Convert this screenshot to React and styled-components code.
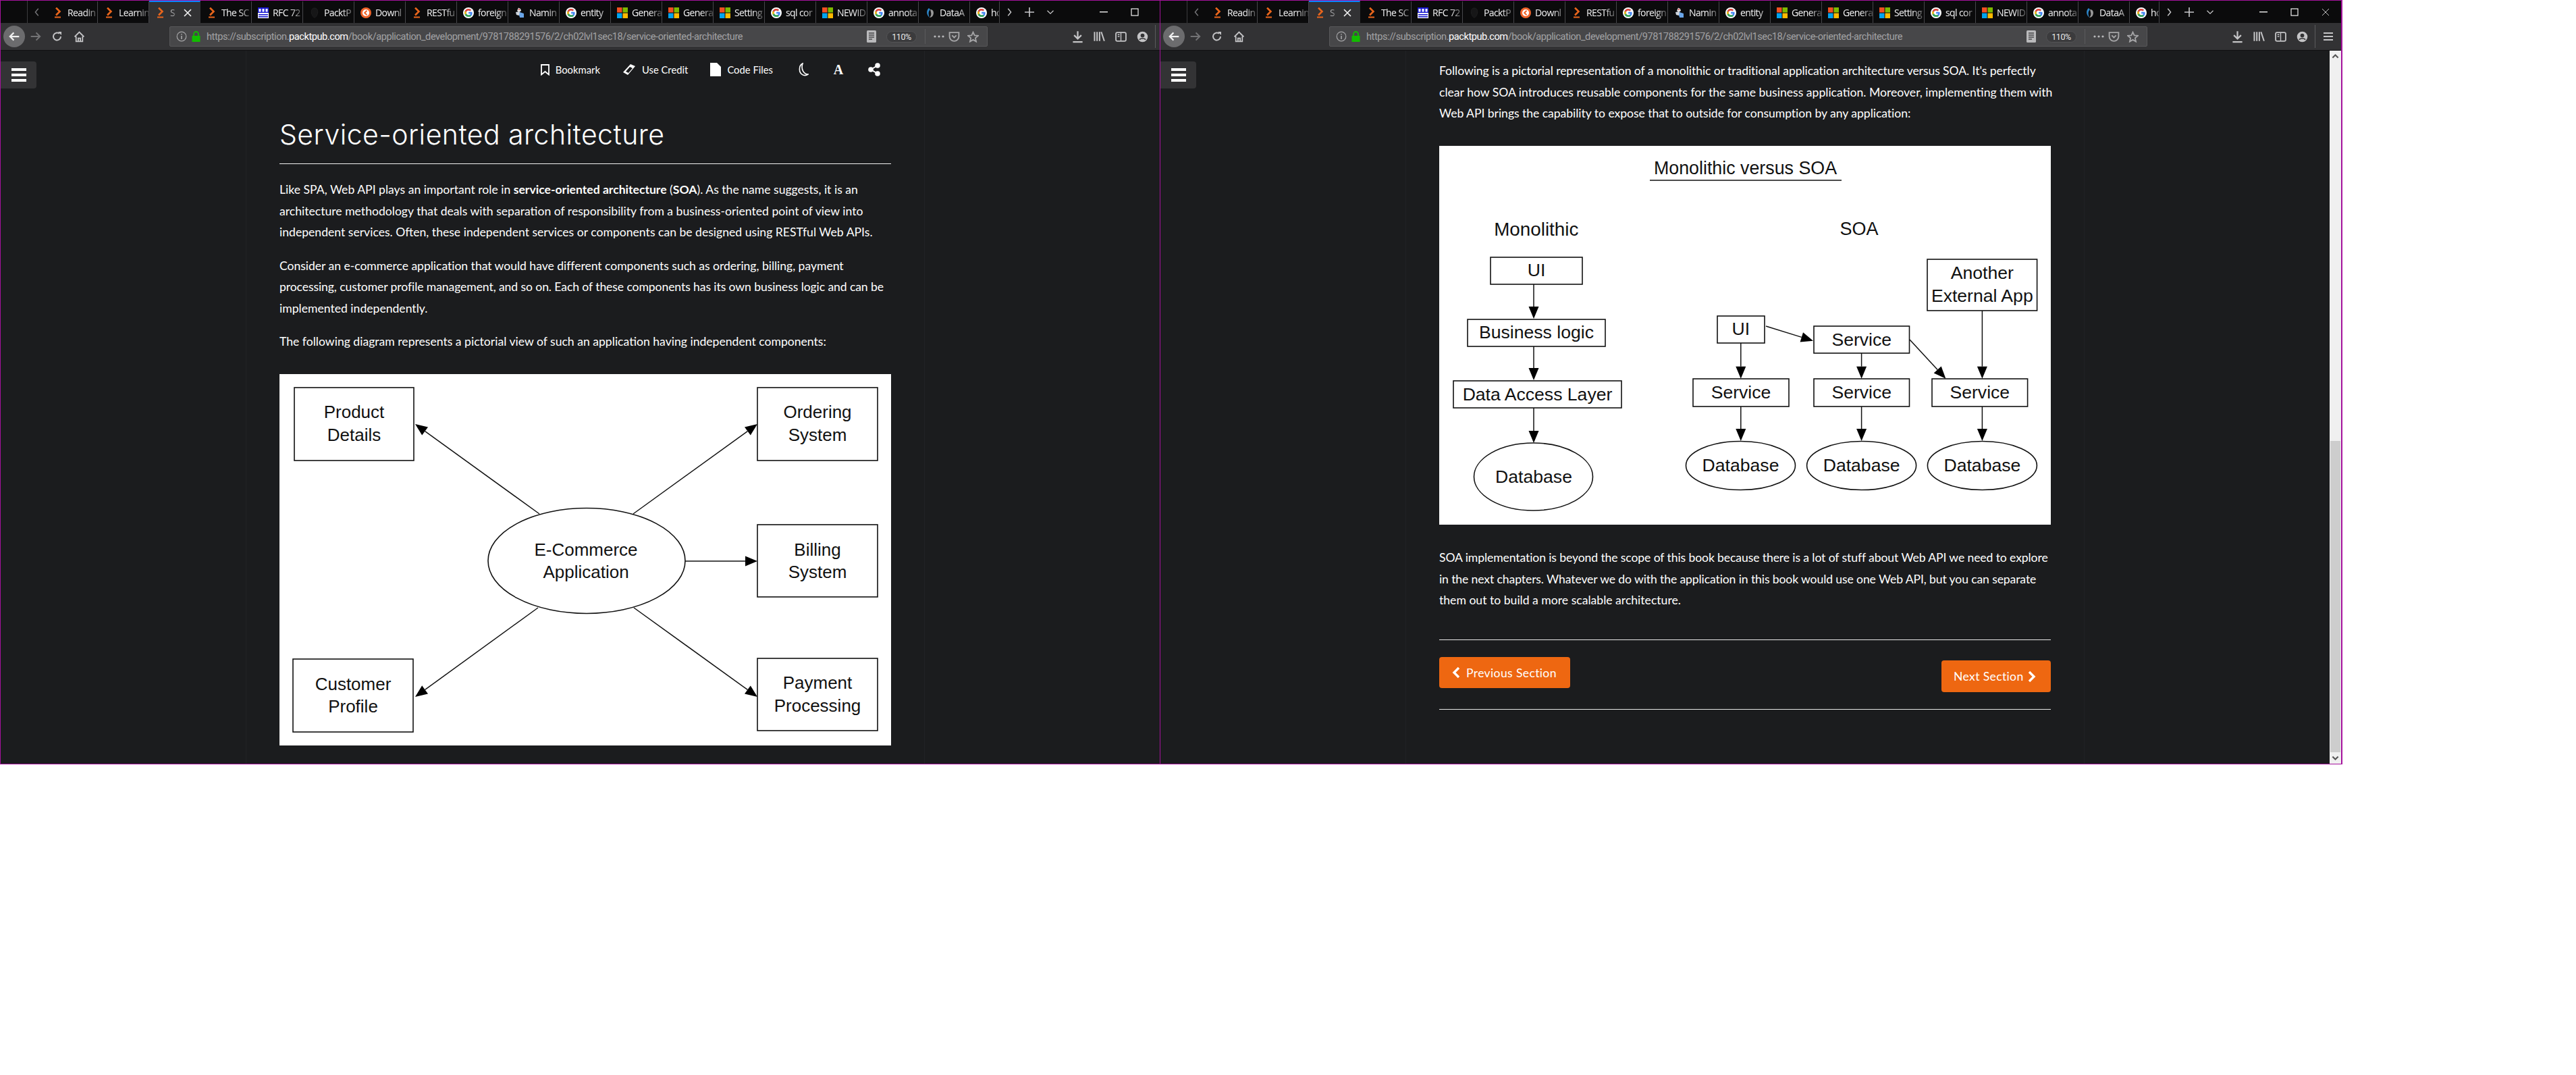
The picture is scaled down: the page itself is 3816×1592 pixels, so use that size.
import React from "react";
import styled, { createGlobalStyle } from "styled-components";

const Global = createGlobalStyle`
  html, body { margin: 0; padding: 0; background: #fff; }
  * { box-sizing: border-box; }
`;

const Screen = styled.div`
  display: flex;
  align-items: flex-start;
  width: 3816px;
  height: 1592px;
  background: #fff;
  overflow: hidden;
  font-family: "Lato", "Liberation Sans", sans-serif;
`;
const Frame = styled.div`
  flex: none;
  width: ${(p) => p.$width}px;
  height: 1132px;
  overflow: hidden;
  border-top: 1px solid #a4129c;
  border-bottom: 1px solid #a4129c;
  border-left: 1px solid #a4129c;
  border-right: ${(p) => (p.$last ? "2px solid #a4129c" : "0")};
`;
const Inner = styled.div`
  width: 1749px;
  height: 100%;
  display: flex;
  flex-direction: column;
`;

/* ---------- tab strip ---------- */
const TabBar = styled.div`
  flex: none;
  height: 33px;
  display: flex;
  align-items: stretch;
  background: #0b0b0c;
  padding-left: 39px;
`;
const TabScroll = styled.div`
  flex: none;
  width: 29px;
  display: flex;
  align-items: center;
  justify-content: center;
  border-left: 1px solid #3c3c3f;
  color: #77777a;
`;
const Tab = styled.div`
  flex: none;
  width: ${(p) => p.$w || 76}px;
  display: flex;
  align-items: center;
  padding-left: 9px;
  gap: 6px;
  background: ${(p) => (p.$active ? "#323234" : "transparent")};
  border-right: 1px solid ${(p) => (p.$active ? "transparent" : "#47474b")};
  border-top: 2px solid ${(p) => (p.$active ? "#0a84ff" : "transparent")};
  color: ${(p) => (p.$active ? "#a9a9ab" : "#f4f4f5")};
  font: 14px "Open Sans", "Liberation Sans", sans-serif;
  letter-spacing: -0.6px;
  white-space: nowrap;
`;
const TabTitle = styled.span`
  flex: 1;
  min-width: 0;
  -webkit-mask-image: linear-gradient(to right, #000 60%, rgba(0, 0, 0, 0.25) 100%);
  mask-image: linear-gradient(to right, #000 60%, rgba(0, 0, 0, 0.25) 100%);
`;
const TabClose = styled.span`
  flex: none;
  width: 24px;
  margin-right: 6px;
  display: flex;
  align-items: center;
  justify-content: center;
  color: #f4f4f5;
`;
const StripBtn = styled.div`
  flex: none;
  width: ${(p) => p.$w}px;
  display: flex;
  align-items: center;
  justify-content: center;
  color: #c9c9cb;
`;
const WinBtn = styled.div`
  flex: none;
  width: 46px;
  margin-left: ${(p) => p.$ml || 0}px;
  display: flex;
  align-items: center;
  justify-content: center;
  color: #f2f2f2;
`;

/* ---------- nav toolbar ---------- */
const Toolbar = styled.div`
  flex: none;
  height: 41px;
  display: flex;
  align-items: center;
  background: #323234;
  border-bottom: 1px solid #101011;
  padding-left: 4px;
  color: #c4c4c6;
`;
const BackBtn = styled.div`
  flex: none;
  width: 32px;
  height: 32px;
  border-radius: 50%;
  background: #6c6c6e;
  color: #f0f0f0;
  display: flex;
  align-items: center;
  justify-content: center;
`;
const ToolBtn = styled.div`
  flex: none;
  width: 32px;
  height: 32px;
  display: flex;
  align-items: center;
  justify-content: center;
  color: ${(p) => (p.$dim ? "#737375" : "#c4c4c6")};
`;
const UrlBar = styled.div`
  flex: none;
  width: 1212px;
  height: 30px;
  margin-left: 118px;
  margin-right: 117px;
  display: flex;
  align-items: center;
  background: #474749;
  border: 1px solid #58585a;
  border-radius: 2px;
  padding: 0 7px 0 8px;
  color: #a6a6a8;
`;
const Lock = styled.div`
  flex: none;
  width: 20px;
  margin-left: 2px;
  display: flex;
  justify-content: center;
`;
const UrlText = styled.div`
  flex: 1;
  margin-left: 6px;
  font: 14.6px "Roboto", "Liberation Sans", sans-serif;
  letter-spacing: -0.45px;
  color: #a2a2a4;
  white-space: nowrap;
  b { font-weight: 400; color: #fff; }
`;
const ZoomPill = styled.div`
  flex: none;
  width: 45px;
  height: 17px;
  margin: 0 12px;
  border-radius: 9px;
  background: #3b3b3d;
  border: 1px solid #535355;
  color: #e8e8e8;
  font: 12.5px "Roboto", sans-serif;
  letter-spacing: -0.4px;
  display: flex;
  align-items: center;
  justify-content: center;
`;
const VRule = styled.div`
  flex: none;
  width: 1px;
  height: ${(p) => p.$h}px;
  margin-right: ${(p) => p.$mr || 0}px;
  margin-left: ${(p) => p.$ml || 0}px;
  background: #5b5b5d;
`;
const BarIcon = styled.div`
  flex: none;
  width: ${(p) => p.$w || 28}px;
  display: flex;
  justify-content: center;
`;

/* ---------- viewport ---------- */
const Viewport = styled.div`
  flex: 1;
  min-height: 0;
  display: flex;
`;
const Page = styled.div`
  position: relative;
  flex: 1;
  min-width: 0;
  background: #1b1c1e;
  overflow: hidden;
`;
const Scrollbar = styled.div`
  flex: none;
  width: 17px;
  background: #f0f0f0;
  display: flex;
  flex-direction: column;
  align-items: center;
  color: #555;
`;
const ScrollArrow = styled.div`
  flex: none;
  height: 17px;
  width: 100%;
  display: flex;
  align-items: center;
  justify-content: center;
`;
const ScrollGap = styled.div`
  flex: 1;
`;
const ScrollThumb = styled.div`
  flex: none;
  width: 15px;
  height: 461px;
  background: #cdcdcd;
`;
const MenuFab = styled.div`
  position: absolute;
  left: 0;
  top: 16px;
  width: 53px;
  height: 40px;
  background: #333335;
  border-radius: 0 4px 4px 0;
  display: flex;
  flex-direction: column;
  justify-content: center;
  gap: 4px;
  padding-left: 16px;
`;
const MenuBar = styled.span`
  display: block;
  width: 22px;
  height: 4px;
  background: #fff;
`;
const Column = styled.div`
  width: 1006px;
  height: 100%;
  margin: 0 auto;
  padding: ${(p) => p.$top || 0}px 49px 0;
  border-left: 1px solid #212225;
  border-right: 1px solid #212225;
`;
const ActionBar = styled.div`
  height: 56px;
  margin: 0 -49px;
  padding-right: 65px;
  display: flex;
  align-items: center;
  justify-content: flex-end;
  gap: 36px;
  color: #fff;
  font-size: 14.8px;
`;
const ActionGroup = styled.div`
  display: flex;
  align-items: center;
  gap: 33px;
`;
const Action = styled.div`
  display: flex;
  align-items: center;
  gap: 9px;
`;
const SerifA = styled.span`
  font: bold 20px "Liberation Serif", serif;
  width: 16px;
  text-align: center;
`;
const Title = styled.h2`
  margin: 40px 0 22px;
  padding-bottom: 15px;
  border-bottom: 1px solid #f2f2f2;
  font: 300 41px/56px "Inter", "Liberation Sans", sans-serif;
  letter-spacing: 0.45px;
  color: #fff;
`;
const Para = styled.p`
  margin: 0 0 17.6px;
  font-size: 17.6px;
  line-height: 31.68px;
  color: #fff;
  white-space: nowrap;
  strong { font-weight: 700; }
`;
const Line = styled.span`
  display: block;
  letter-spacing: ${(p) => p.$ls || 0}px;
`;
const Figure = styled.svg`
  display: block;
  width: 906px;
  height: ${(p) => p.$h}px;
  margin-top: 32px;
  margin-bottom: ${(p) => p.$mb || 0}px;
  background: #fff;
`;
const HRule = styled.hr`
  margin: ${(p) => p.$m};
  height: 1px;
  border: 0;
  background: #e8e8e8;
`;
const Pager = styled.div`
  display: flex;
  justify-content: space-between;
  align-items: flex-start;
`;
const PagerBtn = styled.div`
  display: flex;
  align-items: center;
  gap: ${(p) => p.$gap}px;
  width: ${(p) => p.$w}px;
  height: ${(p) => p.$h}px;
  margin-top: ${(p) => p.$mt}px;
  padding: 0 0 0 ${(p) => p.$pl}px;
  background: #ee6711;
  border-radius: 4px;
  color: #fff;
  font-size: 17.6px;
  letter-spacing: 0.35px;
  white-space: nowrap;
`;

/* ---------- diagram primitives ---------- */
const DBox = styled.rect`
  fill: #fff;
  stroke: #111;
  stroke-width: 1.6;
`;
const DOval = styled.ellipse`
  fill: #fff;
  stroke: #111;
  stroke-width: 1.6;
`;
const DLine = styled.line`
  stroke: #111;
  stroke-width: 1.5;
`;
const DHead = styled.polygon`
  fill: #000;
`;
const DText = styled.text`
  font-family: "Liberation Sans", Arial, sans-serif;
  font-size: ${(p) => p.$s || 26.6}px;
  fill: #111;
  text-anchor: middle;
  dominant-baseline: central;
`;

const Arrow = ({ x1, y1, x2, y2, len = 18, half = 7.5 }) => {
  const a = Math.atan2(y2 - y1, x2 - x1);
  const bx = x2 - Math.cos(a) * len;
  const by = y2 - Math.sin(a) * len;
  const nx = -Math.sin(a) * half;
  const ny = Math.cos(a) * half;
  return (
    <>
      <DLine x1={x1} y1={y1} x2={bx} y2={by} />
      <DHead points={`${x2},${y2} ${bx + nx},${by + ny} ${bx - nx},${by - ny}`} />
    </>
  );
};
const Box = ({ x1, y1, x2, y2, lines = [], tx, size }) => (
  <>
    <DBox x={x1} y={y1} width={x2 - x1} height={y2 - y1} />
    {lines.map(([t, y]) => (
      <DText key={t} x={tx ?? (x1 + x2) / 2} y={y} $s={size}>{t}</DText>
    ))}
  </>
);

const EcommerceDiagram = () => (
  <Figure $h={550} viewBox="0 0 906 550">
    <Arrow x1={385} y1={207} x2={201} y2={74} />
    <Arrow x1={524} y1={207} x2={708} y2={74} />
    <Arrow x1={601} y1={277} x2={708} y2={277} />
    <Arrow x1={383} y1={346} x2={201} y2={478} />
    <Arrow x1={525} y1={346} x2={708} y2={478} />
    <Box x1={22} y1={20} x2={199} y2={128} lines={[["Product", 56], ["Details", 89.6]]} size={26} />
    <Box x1={708} y1={20} x2={886} y2={128} lines={[["Ordering", 56], ["System", 89.6]]} size={26} />
    <Box x1={708} y1={223} x2={886} y2={330} lines={[["Billing", 260], ["System", 293]]} size={26} />
    <Box x1={708} y1={421} x2={886} y2={528} lines={[["Payment", 457], ["Processing", 490.6]]} size={26} />
    <Box x1={20} y1={422} x2={198} y2={530} lines={[["Customer", 459], ["Profile", 492]]} size={26} />
    <DOval cx={455} cy={276.5} rx={146} ry={78} />
    <DText x={454} y={260} $s={26}>E-Commerce</DText>
    <DText x={454} y={293} $s={26}>Application</DText>
  </Figure>
);

const SoaDiagram = () => (
  <Figure $h={561} $mb={33} viewBox="0 0 906 561">
    <DText x={453.5} y={32.5} $s={26.8}>Monolithic versus SOA</DText>
    <DLine x1={312} y1={51} x2={596} y2={51} />
    <DText x={143.8} y={123.4} $s={27.8}>Monolithic</DText>
    <DText x={622} y={123.4} $s={27}>SOA</DText>

    <Arrow x1={140} y1={205} x2={140} y2={256} />
    <Arrow x1={140} y1={296} x2={140} y2={347} />
    <Arrow x1={140} y1={388} x2={140} y2={440} />
    <Box x1={76} y1={165} x2={212} y2={205} lines={[["UI", 184]]} />
    <Box x1={42} y1={257} x2={246} y2={297} lines={[["Business logic", 276]]} />
    <Box x1={21} y1={348} x2={270} y2={388} lines={[["Data Access Layer", 367.6]]} />
    <DOval cx={139.5} cy={490} rx={88} ry={50} />
    <DText x={140} y={490}>Database</DText>

    <Arrow x1={446.8} y1={292} x2={446.8} y2={344.7} />
    <Arrow x1={446.8} y1={386} x2={446.8} y2={437} />
    <Arrow x1={625.6} y1={307} x2={625.6} y2={344.7} />
    <Arrow x1={625.6} y1={386} x2={625.6} y2={437} />
    <Arrow x1={804.4} y1={244} x2={804.4} y2={344.7} />
    <Arrow x1={804.4} y1={386} x2={804.4} y2={437} />
    <Arrow x1={484} y1={267} x2={554} y2={288.7} />
    <Arrow x1={697} y1={287} x2={750.4} y2={344.7} />

    <Box x1={412} y1={252} x2={482} y2={292} lines={[["UI", 271]]} tx={446.8} />
    <Box x1={376} y1={345} x2={518} y2={386} lines={[["Service", 365]]} />
    <Box x1={555} y1={267} x2={696.5} y2={307} lines={[["Service", 287]]} />
    <Box x1={555} y1={345} x2={696.5} y2={386} lines={[["Service", 365]]} />
    <Box x1={730} y1={345} x2={871.6} y2={386} lines={[["Service", 365]]} />
    <Box x1={723} y1={168} x2={885.6} y2={244} lines={[["Another", 187.7], ["External App", 222]]} />
    {[446.5, 625.6, 804.4].map((cx) => (
      <React.Fragment key={cx}>
        <DOval cx={cx} cy={473.5} rx={81} ry={36} />
        <DText x={cx} y={473}>Database</DText>
      </React.Fragment>
    ))}
  </Figure>
);

/* ---------- icons ---------- */
const Ico = ({ size = 16, children, vb = "0 0 16 16" }) => (
  <svg width={size} height={size} viewBox={vb} fill="none" stroke="currentColor" strokeWidth="1.6">{children}</svg>
);
const Fav = {
  packt: (
    <Ico>
      <path d="M5 0.5 L10.5 6 L5 11.5" stroke="#e8651c" strokeWidth="2.6" />
      <rect x="3" y="13.5" width="9" height="2" fill="#e8651c" stroke="none" />
    </Ico>
  ),
  rfc: (
    <Ico>
      <rect x="0" y="0" width="16" height="16" fill="#fff" stroke="none" />
      <rect x="0" y="0" width="16" height="8" fill="#1a1ad0" stroke="none" />
      <rect x="1.5" y="2" width="3" height="4.5" fill="#fff" stroke="none" />
      <rect x="6.5" y="2" width="3" height="4.5" fill="#fff" stroke="none" />
      <rect x="11.5" y="2" width="3" height="4.5" fill="#fff" stroke="none" />
      <rect x="1" y="10" width="14" height="1.6" fill="#1a1ad0" stroke="none" />
      <rect x="1" y="13" width="14" height="1.6" fill="#1a1ad0" stroke="none" />
    </Ico>
  ),
  alien: (
    <Ico>
      <path d="M8 1 C3.5 1 3 5 3.4 8 C3.8 11 6 15 8 15 C10 15 12.2 11 12.6 8 C13 5 12.5 1 8 1Z" fill="#161617" stroke="#1f1f20" strokeWidth="1" />
    </Ico>
  ),
  down: (
    <Ico>
      <circle cx="8" cy="8" r="8" fill="#f0642a" stroke="none" />
      <circle cx="8" cy="8" r="5" fill="#fff" stroke="none" />
      <path d="M9.5 4.8 L6.2 8 L9.5 11.2" stroke="#f0642a" strokeWidth="2" />
    </Ico>
  ),
  google: (
    <Ico>
      <circle cx="8" cy="8" r="8" fill="#fff" stroke="none" />
      <path d="M13.4 6.7H8.1v2.5h3c-.3 1.4-1.5 2.2-3 2.2a3.4 3.4 0 0 1 0-6.8c.9 0 1.6.3 2.2.8l1.8-1.8A6 6 0 1 0 8.1 14c3.2 0 5.5-2.2 5.5-5.5 0-.6 0-1.2-.2-1.8Z" fill="#4285f4" stroke="none" />
      <path d="M2.7 5.3l2.1 1.5a3.4 3.4 0 0 1 3.3-2.2c.9 0 1.6.3 2.2.8l1.8-1.8A6 6 0 0 0 2.7 5.3Z" fill="#ea4335" stroke="none" />
      <path d="M2.7 10.7A6 6 0 0 0 8.1 14c1.6 0 3-.5 4-1.5l-2-1.6c-.5.3-1.2.5-2 .5a3.4 3.4 0 0 1-3.2-2.3Z" fill="#34a853" stroke="none" />
      <path d="M2.7 5.3a6 6 0 0 0 0 5.4l2.2-1.7a3.4 3.4 0 0 1 0-2.1Z" fill="#fbbc05" stroke="none" />
    </Ico>
  ),
  name: (
    <Ico>
      <path d="M6 0.5 L9 2 L10 5 L7 7 L4 5Z" fill="#e6e6e6" stroke="none" />
      <path d="M2 7 L7 6 L9 9 L7 12 L3 11Z" fill="#cfd6de" stroke="none" />
      <path d="M8 7 L14 9 L14 15 L8 15 L7 11Z" fill="#6aa5e8" stroke="none" />
      <circle cx="7" cy="3" r="1" fill="#d33" stroke="none" />
    </Ico>
  ),
  ms: (
    <Ico>
      <rect x="0" y="0" width="7.5" height="7.5" fill="#f25022" stroke="none" />
      <rect x="8.5" y="0" width="7.5" height="7.5" fill="#7fba00" stroke="none" />
      <rect x="0" y="8.5" width="7.5" height="7.5" fill="#00a4ef" stroke="none" />
      <rect x="8.5" y="8.5" width="7.5" height="7.5" fill="#ffb900" stroke="none" />
    </Ico>
  ),
  data: (
    <Ico>
      <path d="M6 1 C2 4 2 11 7 15 C5 10 5 6 8 3Z" fill="#2d86c9" stroke="none" />
      <path d="M8 3 C13 3 14 8 12 12 C11 14 9 15 7 15 C9 13 10 10 9 7Z" fill="#9a9a9a" stroke="none" />
    </Ico>
  ),
};

const tabs = [
  ["packt", "Readin"], ["packt", "Learnin"], ["packt", "Ser", true], ["packt", "The SC"],
  ["rfc", "RFC 72"], ["alien", "PacktP"], ["down", "Downl"], ["packt", "RESTfu"],
  ["google", "foreign"], ["name", "Namin"], ["google", "entity"], ["ms", "Genera"],
  ["ms", "Genera"], ["ms", "Setting"], ["google", "sql cor"], ["ms", "NEWID"],
  ["google", "annota"], ["data", "DataA"], ["google", "ho"],
];

const Cross = ({ s = 12, w = 1.6 }) => (
  <svg width={s} height={s} viewBox="0 0 12 12" stroke="currentColor" strokeWidth={w}><path d="M1 1 L11 11 M11 1 L1 11" /></svg>
);

const Strip = () => (
  <TabBar>
    <TabScroll><Ico size={14}><path d="M10 2 L5 8 L10 14" /></Ico></TabScroll>
    {tabs.map(([ico, title, active], i) => (
      <Tab key={i} $active={active} $w={i === tabs.length - 1 ? 44 : 76}>
        {Fav[ico]}
        <TabTitle>{title}</TabTitle>
        {active && <TabClose><Cross /></TabClose>}
      </Tab>
    ))}
    <StripBtn $w={28}><Ico size={14}><path d="M6 2 L11 8 L6 14" /></Ico></StripBtn>
    <StripBtn $w={32}><Ico size={16}><path d="M8 1 V15 M1 8 H15" /></Ico></StripBtn>
    <StripBtn $w={30}><Ico size={12}><path d="M2 5 L8 11 L14 5" /></Ico></StripBtn>
    <WinBtn $ml={41}><svg width="12" height="2"><rect width="12" height="1.4" fill="currentColor" /></svg></WinBtn>
    <WinBtn><svg width="12" height="12" fill="none" stroke="currentColor" strokeWidth="1.2"><rect x="1" y="1" width="10" height="10" /></svg></WinBtn>
    <WinBtn><Cross w={0.8} /></WinBtn>
  </TabBar>
);

const Nav = () => (
  <Toolbar>
    <BackBtn><Ico size={18}><path d="M14.5 8 H2.5 M7.5 3 L2.5 8 L7.5 13" strokeWidth="2" /></Ico></BackBtn>
    <ToolBtn $dim><Ico size={18}><path d="M1.5 8 H13.5 M8.5 3 L13.5 8 L8.5 13" strokeWidth="1.8" /></Ico></ToolBtn>
    <ToolBtn><Ico size={16}><path d="M13 8 A5.5 5.5 0 1 1 11 3.8" strokeWidth="2" /><path d="M9 1 H14 V6Z" fill="currentColor" stroke="none" /></Ico></ToolBtn>
    <ToolBtn><Ico size={17}><path d="M1.5 8 L8 1.5 L14.5 8 M3.5 7.5 V14.5 H12.5 V7.5 M6.5 14.5 V10 H9.5 V14.5" strokeWidth="1.7" /></Ico></ToolBtn>
    <UrlBar>
      <BarIcon $w={18}><Ico size={16}><circle cx="8" cy="8" r="6.8" strokeWidth="1.2" /><path d="M8 7 V12 M8 4 V5.6" /></Ico></BarIcon>
      <Lock>
        <svg width="13" height="16" viewBox="0 0 13 16" fill="none"><rect x="0.5" y="7" width="12" height="9" fill="#12bc00" /><path d="M3 7 V4.5 A3.5 3.5 0 0 1 10 4.5 V7" stroke="#12bc00" strokeWidth="1.8" /></svg>
      </Lock>
      <UrlText>https://subscription.<b>packtpub.com</b>/book/application_development/9781788291576/2/ch02lvl1sec18/service-oriented-architecture</UrlText>
      <BarIcon $w={20}><svg width="14" height="18" viewBox="0 0 14 18"><rect width="14" height="18" rx="1.5" fill="#b9b9bb" /><path d="M3 4H11M3 7H11M3 10H11M3 13H8" stroke="#474749" strokeWidth="1.3" /></svg></BarIcon>
      <ZoomPill>110%</ZoomPill>
      <VRule $h={22} $mr={12} />
      <BarIcon $w={16}><svg width="16" height="4"><circle cx="2" cy="2" r="1.6" fill="#b9b9bb" /><circle cx="8" cy="2" r="1.6" fill="#b9b9bb" /><circle cx="14" cy="2" r="1.6" fill="#b9b9bb" /></svg></BarIcon>
      <BarIcon $w={28}><Ico size={17}><path d="M1.5 2 H14.5 V7.5 A6.5 6.5 0 0 1 1.5 7.5Z" strokeWidth="1.8" /><path d="M5 6 L8 9 L11 6" strokeWidth="1.8" /></Ico></BarIcon>
      <BarIcon $w={28}><Ico size={17}><path d="M8 1.5 L10 6 L15 6.5 L11.2 9.8 L12.3 14.7 L8 12.1 L3.7 14.7 L4.8 9.8 L1 6.5 L6 6Z" strokeWidth="1.7" /></Ico></BarIcon>
    </UrlBar>
    <ToolBtn><Ico size={19}><path d="M8 1 V10 M3.5 6 L8 10.5 L12.5 6 M2 14.5 H14" strokeWidth="1.9" /></Ico></ToolBtn>
    <ToolBtn><Ico size={18}><path d="M2.2 2 V14 M5.5 2 V14 M8.8 2 V14 M11 2 L15 14" strokeWidth="1.8" /></Ico></ToolBtn>
    <ToolBtn><Ico size={17}><rect x="1" y="2" width="14" height="12" rx="2" strokeWidth="1.7" /><path d="M8 2 V14 M3.5 5 H6 M3.5 7.5 H6" strokeWidth="1.3" /></Ico></ToolBtn>
    <ToolBtn><Ico size={17}><circle cx="8" cy="8" r="7.3" fill="currentColor" stroke="none" /><circle cx="8" cy="6.2" r="2.7" fill="#323234" stroke="none" /><path d="M3.8 12 C5 9.8 11 9.8 12.2 12" stroke="#323234" strokeWidth="1.6" /></Ico></ToolBtn>
    <VRule $h={34} $ml={3} $mr={3} />
    <ToolBtn><svg width="14" height="12"><rect width="14" height="2" y="0" fill="#c4c4c6" /><rect width="14" height="2" y="5" fill="#c4c4c6" /><rect width="14" height="2" y="10" fill="#c4c4c6" /></svg></ToolBtn>
  </Toolbar>
);

const Menu = () => (
  <MenuFab><MenuBar /><MenuBar /><MenuBar /></MenuFab>
);

const Browser = ({ width, last, children }) => (
  <Frame $width={width} $last={last}>
    <Inner>
      <Strip />
      <Nav />
      <Viewport>
        <Page>
          {children}
          <Menu />
        </Page>
        <Scrollbar>
          <ScrollArrow><Ico size={11}><path d="M2 11 L8 5 L14 11" strokeWidth="3" /></Ico></ScrollArrow>
          <ScrollGap />
          <ScrollThumb />
          <ScrollArrow><Ico size={11}><path d="M2 5 L8 11 L14 5" strokeWidth="3" /></Ico></ScrollArrow>
        </Scrollbar>
      </Viewport>
    </Inner>
  </Frame>
);

const Chapter = () => (
  <Column>
    <ActionBar>
      <ActionGroup>
        <Action>
          <svg width="13" height="17" viewBox="0 0 13 17" fill="none" stroke="#fff" strokeWidth="1.8"><path d="M1 1 H12 V15.5 L6.5 11 L1 15.5Z" /></svg>
          Bookmark
        </Action>
        <Action>
          <svg width="20" height="18" viewBox="0 0 20 18"><path d="M12 1 L19 4 L8 17 L1 13Z" fill="#fff" /><path d="M11 5 L15 7 L9 14 L5 12Z" fill="#1b1c1e" /></svg>
          Use Credit
        </Action>
        <Action>
          <svg width="16" height="20" viewBox="0 0 16 20"><path d="M0 0 H10 L16 6 V20 H0Z" fill="#fff" /></svg>
          Code Files
        </Action>
      </ActionGroup>
      <svg width="17" height="20" viewBox="0 0 17 20" fill="none" stroke="#fff" strokeWidth="1.6"><path d="M8 1 C2 4 1.5 15 8.5 18 C11 19 14 18.5 16 17 C10 17 5 10 8 1Z" /></svg>
      <SerifA>A</SerifA>
      <svg width="18" height="20" viewBox="0 0 18 20" fill="#fff"><circle cx="14" cy="4" r="3.8" /><circle cx="4" cy="10" r="3.8" /><circle cx="14" cy="16" r="3.8" /><path d="M4 10 L14 4 M4 10 L14 16" stroke="#fff" strokeWidth="2" /></svg>
    </ActionBar>
    <Title>Service-oriented architecture</Title>
    <Para>
      <Line>Like SPA, Web API plays an important role in <strong>service-oriented architecture</strong> (<strong>SOA</strong>). As the name suggests, it is an</Line>
      <Line>architecture methodology that deals with separation of responsibility from a business-oriented point of view into</Line>
      <Line>independent services. Often, these independent services or components can be designed using RESTful Web APIs.</Line>
    </Para>
    <Para>
      <Line $ls={-0.04}>Consider an e-commerce application that would have different components such as ordering, billing, payment</Line>
      <Line $ls={-0.1}>processing, customer profile management, and so on. Each of these components has its own business logic and can be</Line>
      <Line>implemented independently.</Line>
    </Para>
    <Para>The following diagram represents a pictorial view of such an application having independent components:</Para>
    <EcommerceDiagram />
  </Column>
);

const ChapterEnd = () => (
  <Column $top={14}>
    <Para>
      <Line $ls={-0.08}>Following is a pictorial representation of a monolithic or traditional application architecture versus SOA. It's perfectly</Line>
      <Line>clear how SOA introduces reusable components for the same business application. Moreover, implementing them with</Line>
      <Line $ls={-0.05}>Web API brings the capability to expose that to outside for consumption by any application:</Line>
    </Para>
    <SoaDiagram />
    <Para>
      <Line $ls={-0.11}>SOA implementation is beyond the scope of this book because there is a lot of stuff about Web API we need to explore</Line>
      <Line $ls={-0.12}>in the next chapters. Whatever we do with the application in this book would use one Web API, but you can separate</Line>
      <Line>them out to build a more scalable architecture.</Line>
    </Para>
    <HRule $m="42px 0 0" />
    <Pager>
      <PagerBtn $w={194} $h={46} $mt={25} $pl={19} $gap={9}>
        <svg width="12" height="18" viewBox="0 0 12 18" fill="none" stroke="#fff" strokeWidth="3.4"><path d="M10 2 L3 9 L10 16" /></svg>
        Previous Section
      </PagerBtn>
      <PagerBtn $w={162} $h={47} $mt={30} $pl={18} $gap={6}>
        Next Section
        <svg width="12" height="18" viewBox="0 0 12 18" fill="none" stroke="#fff" strokeWidth="3.4"><path d="M2 2 L9 9 L2 16" /></svg>
      </PagerBtn>
    </Pager>
    <HRule $m="25px 0 0" />
  </Column>
);

export default function App() {
  return (
    <Screen>
      <Global />
      <Browser width={1718}><Chapter /></Browser>
      <Browser width={1752} last><ChapterEnd /></Browser>
    </Screen>
  );
}
